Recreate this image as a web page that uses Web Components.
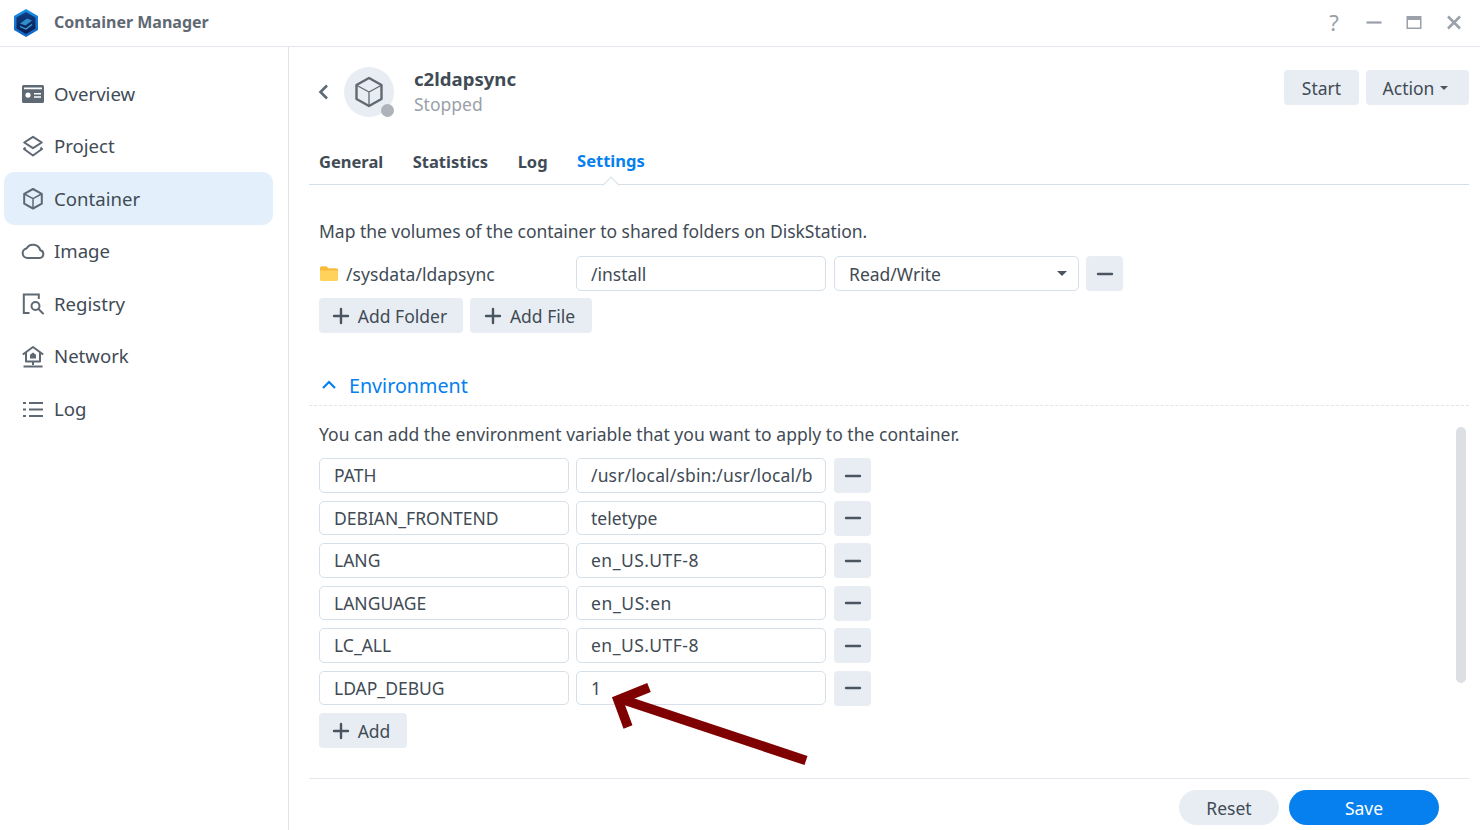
<!DOCTYPE html>
<html lang="en"><head><meta charset="utf-8"><title>Container Manager</title>
<style>
html,body{margin:0;padding:0;height:830px;overflow:hidden;background:#fff}
body{font:17.5px "Noto Sans",sans-serif;color:#414b55}
</style></head><body>
<cm-app></cm-app>
<script>
const ICONS={
overview:'<svg width="24" height="24" viewBox="0 0 24 24"><path fill="#5f6973" fill-rule="evenodd" d="M2.500 3h19A1.500 1.500 0 0 1 23 4.500v15a1.500 1.500 0 0 1-1.500 1.500h-19A1.500 1.500 0 0 1 1 19.500v-15A1.500 1.500 0 0 1 2.500 3zM3 5.500v1.700h18V5.500zM7 10.500a2.600 2.600 0 1 0 0 5.200 2.600 2.600 0 0 0 0-5.200zM13 11v1.500h7V11zM13 14.200v1.500h7v-1.500z"/></svg>',
project:'<svg width="24" height="24" viewBox="0 0 24 24" fill="none" stroke="#5f6973" stroke-width="2" stroke-linejoin="round"><path d="M12 1.800l8.800 5.700-8.800 5.700-8.800-5.700z"/><path d="M4.500 12.500L3 14l9 6.500 9-6.500-1.500-1.500"/></svg>',
container:'<svg width="24" height="24" viewBox="0 0 24 24" fill="none" stroke="#5f6973" stroke-width="2" stroke-linejoin="round"><path d="M12 2l8.800 4.800v9.900L12 21.500 3.200 16.700V6.800z"/><path d="M3.500 7L12 11.700 20.500 7M12 11.700v9.800" stroke-width="1.500"/></svg>',
image:'<svg width="24" height="24" viewBox="0 0 24 24" fill="none" stroke="#5f6973" stroke-width="2"><path d="M6.500 18h12a3.900 3.900 0 0 0 .8-7.700A7.500 7.500 0 0 0 5.500 8.500 4.800 4.800 0 0 0 6.500 18z" stroke-linejoin="round"/></svg>',
registry:'<svg width="24" height="24" viewBox="0 0 24 24" fill="none" stroke="#5f6973" stroke-width="2"><path d="M8.500 21H2.800V2.500h15V7"/><circle cx="14.500" cy="14" r="4"/><path d="M17.500 17l4.500 4.500" stroke-linecap="round"/></svg>',
network:'<svg width="24" height="24" viewBox="0 0 24 24" fill="none" stroke="#5f6973" stroke-width="2"><path d="M1.800 9.500L12 2l10.200 7.500M5 7.500V16.500h14V7.500M12 16.500V20M2.500 21.500h19" stroke-linejoin="round"/><path d="M12 7.500l3 2.300v3.700H9V9.800z" fill="#5f6973" stroke="none"/></svg>',
log:'<svg width="24" height="24" viewBox="0 0 24 24" fill="#5f6973"><path d="M2 5h3v2H2zM8 5h14v2H8zM2 11.500h3v2H2zM8 11.500h14v2H8zM2 18h3v2H2zM8 18h14v2H8z"/></svg>',
plus:'<svg width="18" height="18" viewBox="0 0 18 18" stroke="#4a5560" stroke-width="2.400" stroke-linecap="round"><path d="M9 2v14M2 9h14"/></svg>',
minus:'<svg width="18" height="18" viewBox="0 0 18 18" stroke="#4a5560" stroke-width="2.400" stroke-linecap="round"><path d="M2 9h14"/></svg>'
};
function def(name,css,html){
  customElements.define(name,class extends HTMLElement{
    constructor(){super();const r=this.attachShadow({mode:'open'});
      r.innerHTML='<style>'+css+'</style>'+(typeof html==='function'?html(this):html);}
  });
}
def('cm-logo',':host{display:block;width:28px;height:30px}',
`<svg width="28" height="30" viewBox="0 0 28 30"><defs><linearGradient id="g" x1="0" y1="0" x2="0" y2="1"><stop offset="0" stop-color="#1a8fe6"/><stop offset="1" stop-color="#0f62c4"/></linearGradient><linearGradient id="h" x1="0" y1="0" x2="0" y2="1"><stop offset="0" stop-color="#123f86"/><stop offset="1" stop-color="#071d4f"/></linearGradient></defs>
<path d="M14 1l12 7v14l-12 7-12-7V8z" fill="url(#g)"/><path d="M14 4l9.500 5.500v11L14 26l-9.500-5.500v-11z" fill="url(#h)"/><path d="M8 15.500l7-5 5 2-6.500 5z" fill="#2f8fc8"/><path d="M8 18.500l6 2.500 6-4.500" fill="none" stroke="#3fa4d8" stroke-width="1.200"/></svg>`);
def('cm-winbtn',':host{display:flex;width:40px;height:46px;align-items:center;justify-content:center;color:#9aa1a9}','<slot></slot>');
def('cm-titlebar',`:host{display:flex;align-items:center;height:46px;border-bottom:1px solid #e3e8ee;padding:0 6px 0 12px}
.t{font:bold 16px "Noto Sans",sans-serif;color:#5f6973;margin-left:14px;flex:1;padding-bottom:2px}
.q{font:22px "Noto Sans",sans-serif;color:#9aa1a9;padding-bottom:3px}`,
`<cm-logo></cm-logo><span class="t">Container Manager</span>
<cm-winbtn><span class="q">?</span></cm-winbtn>
<cm-winbtn><svg width="16" height="16" viewBox="0 0 16 16"><path d="M.5 7.500h15" stroke="#9aa1a9" stroke-width="2.200"/></svg></cm-winbtn>
<cm-winbtn><svg width="16" height="16" viewBox="0 0 16 16"><path fill="#9aa1a9" fill-rule="evenodd" d="M.5 1h15v13H.5zM2 5v7.500h12V5z"/></svg></cm-winbtn>
<cm-winbtn><svg width="16" height="16" viewBox="0 0 16 16"><path d="M2 1.500l12 12M14 1.500l-12 12" stroke="#9aa1a9" stroke-width="2.600"/></svg></cm-winbtn>`);
def('cm-nav-item',`:host{display:flex;align-items:center;height:52.500px;margin-left:4px;width:269px;border-radius:10px;padding:0 0 0 17px;box-sizing:border-box;font-size:18.600px;color:#414b55;gap:10px}
:host([active]){background:#e3f0fc}
.i{display:block;flex:none;width:23px;height:24px;margin-top:1.500px}`,
el=>`<span class="i">${ICONS[el.getAttribute('icon')]}</span><slot></slot>`);
def('cm-sidebar',`:host{display:block;width:288px;border-right:1px solid #dfe5ec;padding-top:20px;height:763px;flex:none}`,'<slot></slot>');
def('cm-btn',`:host{display:inline-flex;align-items:center;justify-content:center;height:35px;background:#e8edf4;border-radius:4px;color:#414b55;font-size:17.500px;gap:8px;box-sizing:border-box;flex:none;padding-right:var(--pr,0)}
:host([pill]){border-radius:18px}:host([primary]){background:#0580ee;color:#fff}
span{display:flex}`,
el=>(el.hasAttribute('icon')?`<span>${ICONS[el.getAttribute('icon')]}</span>`:'')+'<slot></slot>');
def('cm-input',`:host{display:flex;align-items:center;height:34.500px;width:250px;border:1px solid #d5e0ea;border-radius:5px;padding-left:14px;box-sizing:border-box;font-size:17.500px;color:#414b55;background:#fff;flex:none;white-space:nowrap}
.c{width:221px;letter-spacing:var(--ls,0)}`,'<div class="c"><slot></slot></div>');
def('cm-select',`:host{display:flex;align-items:center;justify-content:space-between;height:34.500px;width:245px;border:1px solid #d5e0ea;border-radius:5px;padding:0 11px 0 14px;box-sizing:border-box;font-size:17.500px;color:#414b55;flex:none}
i{border:5px solid transparent;border-top:5px solid #4a5560;border-bottom:0;display:block;margin-top:-1px}`,'<slot></slot><i></i>');
def('cm-env-row',`:host{display:flex;gap:7px;height:34.500px;margin-bottom:8px}cm-btn{width:37px}.m{margin-left:1px}`,
el=>`<cm-input>${el.getAttribute('k')}</cm-input><cm-input style="--ls:${el.getAttribute('ls')||0}px">${el.getAttribute('v')}</cm-input><cm-btn class="m" icon="minus"></cm-btn>`);
def('cm-tabs',`:host{display:flex;height:42px;align-items:center;gap:29.500px;padding:0 0 2px 10px;border-bottom:1px solid #d5e0ea;font:bold 16.500px "Noto Sans",sans-serif;color:#414b55;position:relative}
.a{color:#0580ee;position:relative;display:block;align-self:stretch;line-height:42px}
.a::after{content:"";position:absolute;left:50%;bottom:-8.500px;width:12px;height:12px;margin-left:-6px;background:#fff;border-left:1px solid #d5e0ea;border-top:1px solid #d5e0ea;transform:rotate(45deg);box-sizing:border-box}`,
`<span>General</span><span>Statistics</span><span>Log</span><span class="a">Settings</span>`);
def('cm-avatar',`:host{display:flex;width:50px;height:50px;border-radius:50%;background:#e8edf4;align-items:center;justify-content:center;position:relative;flex:none}
b{position:absolute;right:0;bottom:0;width:13px;height:13px;border-radius:50%;background:#aeb3ba}`,
`<svg width="30" height="32" viewBox="0 0 30 32" fill="none" stroke="#5f6973" stroke-linejoin="round"><path d="M15 2l12.500 7v14L15 30 2.500 23V9z" stroke-width="2.400"/><path d="M3 9.500L15 16l12-6.500M15 16v14" stroke-width="1.300"/></svg><b></b>`);
def('cm-header',`:host{display:flex;align-items:flex-start;height:88px;box-sizing:border-box;padding:20px 0 0 0}
.back{width:35px;margin-top:16px;flex:none;display:block}
.n{margin-left:20px;flex:1}.nm{font:bold 18.600px "Noto Sans",sans-serif;color:#414b55;line-height:24px}
.st{font-size:17.500px;color:#9aa1a9;line-height:24px;margin-top:1px}
.btns{display:flex;gap:7px;margin-top:3px}
.car{border:4px solid transparent;border-top:4px solid #4a5560;border-bottom:0;display:block;margin-left:-2px}`,
`<svg class="back" width="35" height="18" viewBox="0 0 35 18"><path d="M18 2.500L11.500 9 18 15.500" fill="none" stroke="#5f6973" stroke-width="2.600"/></svg><cm-avatar></cm-avatar>
<div class="n"><div class="nm">c2ldapsync</div><div class="st">Stopped</div></div>
<div class="btns"><cm-btn style="width:75px">Start</cm-btn><cm-btn style="width:103px;--pr:4px">Action<span class="car"></span></cm-btn></div>`);
def('cm-arrow',`:host{position:absolute;left:605px;top:678px;width:210px;height:95px;pointer-events:none}`,
`<svg width="210" height="95" viewBox="605 678 210 95"><path d="M806 760.500L621 699" stroke="#7f0000" stroke-width="9.500" fill="none"/><path d="M649 687.500L618 700 628 727" stroke="#7f0000" stroke-width="9.500" fill="none" stroke-miterlimit="10"/></svg>`);
def('cm-scrollbar',`:host{position:absolute;left:1456px;top:427px;width:10px;height:256px;border-radius:5px;background:#dcdfe3}`,'');
def('cm-env-head',`:host{display:flex;align-items:center;height:36px;padding:0 0 2px 12px;margin-left:-10px;color:#0580ee;font-size:19.700px;gap:12px;border-bottom:1px dashed #dfe6ee}`,
`<svg width="16" height="16" viewBox="0 0 16 16"><path d="M2 11l6-6 6 6" fill="none" stroke="#0580ee" stroke-width="2.200"/></svg><slot></slot>`);
def('cm-settings',`:host{display:block;position:relative;flex:1;min-height:0;padding:0 0 0 10px}
p{margin:0;line-height:24px;font-size:17.500px}
.vol{display:flex;align-items:center;gap:8px;height:35px;margin-top:13px}
.path{width:249px;display:flex;align-items:center;gap:8px;flex:none;font-size:17.500px;letter-spacing:.06px}
.acts{display:flex;gap:7px;margin-top:7px;margin-bottom:34px}`,
`<div style="height:34px"></div><p style="letter-spacing:-.03px">Map the volumes of the container to shared folders on DiskStation.</p>
<div class="vol"><span class="path"><svg width="19" height="17" viewBox="0 0 19 17"><path d="M1 3A1.500 1.500 0 0 1 2.500 1.500h5l2 2h8A1.500 1.500 0 0 1 19 5v9.500a1.500 1.500 0 0 1-1.500 1.500h-15A1.500 1.500 0 0 1 1 14.500z" fill="#ffd25c"/><path d="M1 3A1.500 1.500 0 0 1 2.500 1.500h5l2 2h8A1.500 1.500 0 0 1 19 5v.5H1z" fill="#f9b93a"/></svg>/sysdata/ldapsync</span><cm-input>/install</cm-input><cm-select>Read/Write</cm-select><cm-btn icon="minus" style="width:37px;margin-left:-1px"></cm-btn></div>
<div class="acts"><cm-btn icon="plus" style="width:144px;--pr:3px">Add Folder</cm-btn><cm-btn icon="plus" style="width:122px;--pr:3px">Add File</cm-btn></div>
<cm-env-head>Environment</cm-env-head>
<div style="height:16px"></div><p style="margin-bottom:12px;letter-spacing:.03px">You can add the environment variable that you want to apply to the container.</p>
<cm-env-row k="PATH" v="/usr/local/sbin:/usr/local/b" ls=".15"></cm-env-row>
<cm-env-row k="DEBIAN_FRONTEND" v="teletype"></cm-env-row>
<cm-env-row k="LANG" v="en_US.UTF-8" ls=".5"></cm-env-row>
<cm-env-row k="LANGUAGE" v="en_US:en" ls=".6"></cm-env-row>
<cm-env-row k="LC_ALL" v="en_US.UTF-8" ls=".5"></cm-env-row>
<cm-env-row k="LDAP_DEBUG" v="1"></cm-env-row>
<cm-btn icon="plus" style="width:88px;--pr:4px">Add</cm-btn>`);
def('cm-footer',`:host{display:flex;justify-content:flex-end;gap:10px;height:52px;border-top:1px solid #e3e8ee;padding:11px 30px 0 0;box-sizing:border-box;flex:none}`,
`<cm-btn pill style="width:100px">Reset</cm-btn><cm-btn pill primary style="width:150px">Save</cm-btn>`);
def('cm-main',`:host{display:flex;flex-direction:column;flex:1;padding:0 11px 0 20px;height:783px;box-sizing:border-box;min-width:0}`,
`<cm-header></cm-header><cm-tabs style="margin-top:5px"></cm-tabs><cm-settings></cm-settings><cm-footer></cm-footer>`);
def('cm-app',`:host{display:block;width:1480px;height:830px;position:relative;overflow:hidden}
.b{display:flex}`,
`<cm-titlebar></cm-titlebar><div class="b"><cm-sidebar>
<cm-nav-item icon="overview">Overview</cm-nav-item>
<cm-nav-item icon="project">Project</cm-nav-item>
<cm-nav-item icon="container" active>Container</cm-nav-item>
<cm-nav-item icon="image">Image</cm-nav-item>
<cm-nav-item icon="registry">Registry</cm-nav-item>
<cm-nav-item icon="network">Network</cm-nav-item>
<cm-nav-item icon="log">Log</cm-nav-item>
</cm-sidebar><cm-main></cm-main></div><cm-scrollbar></cm-scrollbar><cm-arrow></cm-arrow>`);
</script></body></html>
